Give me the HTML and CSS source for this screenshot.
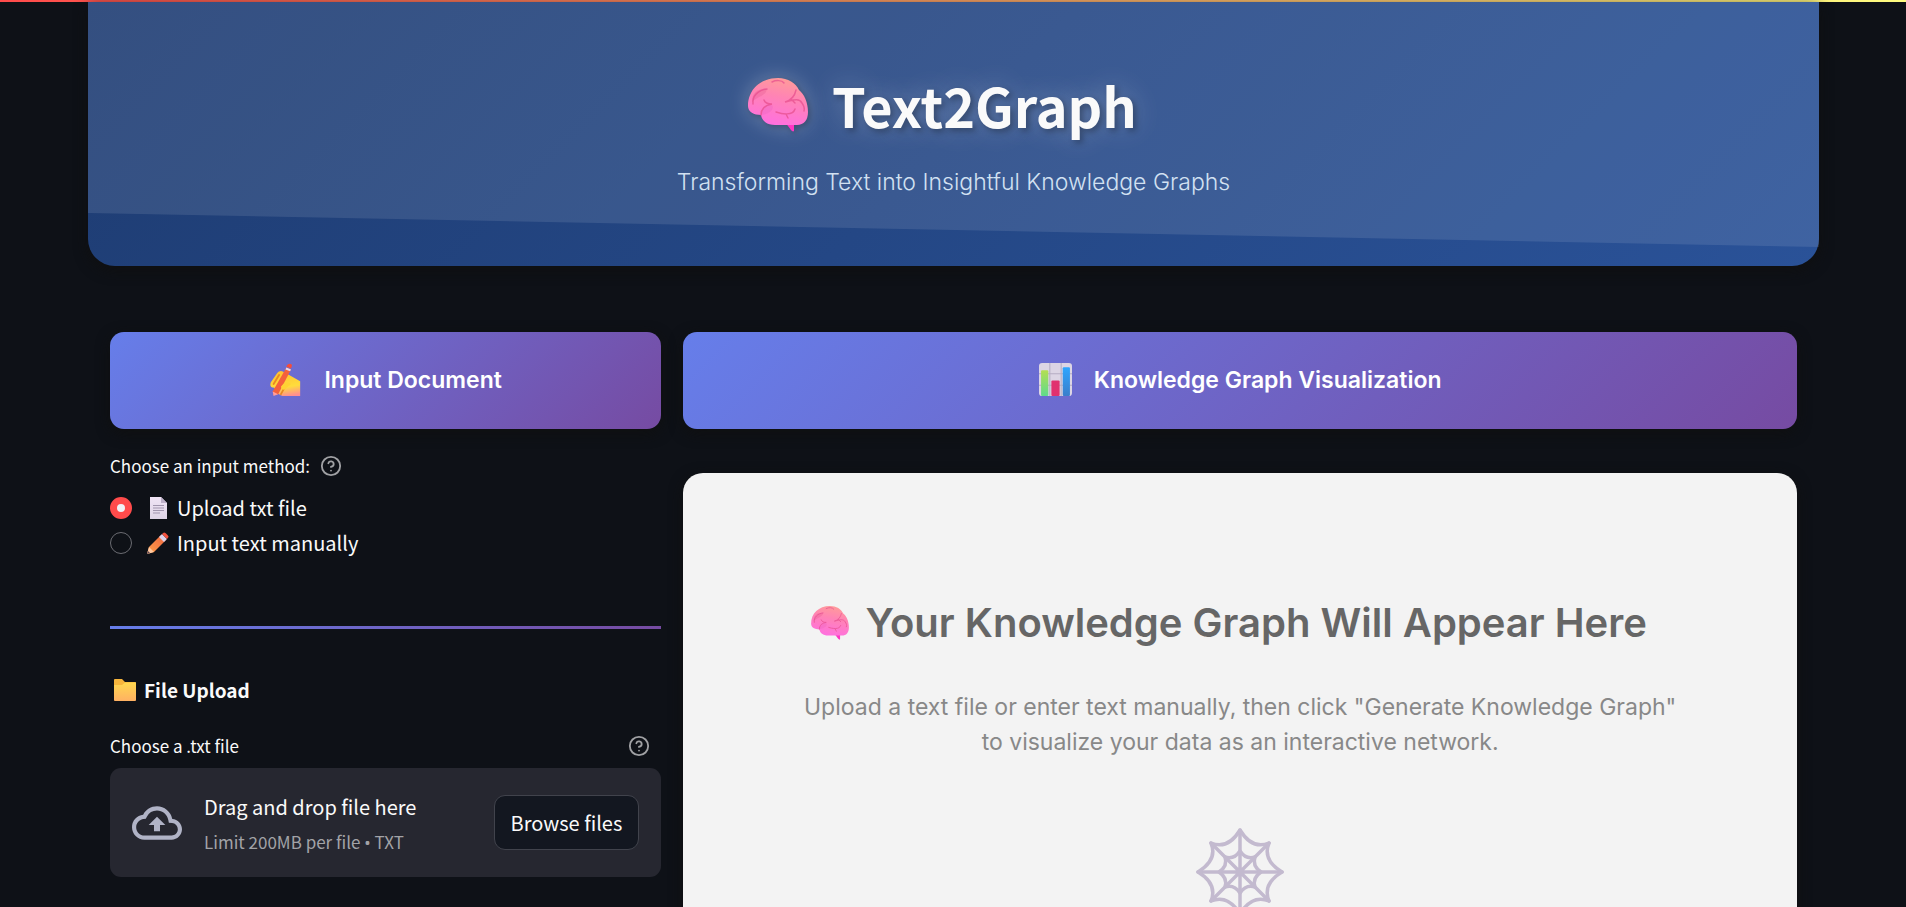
FILE: index.html
```html
<!DOCTYPE html>
<html lang="en">
<head>
<meta charset="utf-8">
<title>Text2Graph</title>
<link rel="stylesheet" href="styles.css">
</head>
<body>
<svg class="defs" width="0" height="0" aria-hidden="true">
  <defs>
    <linearGradient id="brain-fill" x1="0.65" y1="0" x2="0.4" y2="1">
      <stop offset="0" stop-color="#ff9c98"/><stop offset="0.4" stop-color="#ff84b4"/><stop offset="1" stop-color="#ff6fe0"/>
    </linearGradient>
    <symbol id="brain" viewBox="0 0 60 54">
      <path d="M37 44 46 45V53C45 54 44 53 43 52Z" fill="#ff35c4"/>
      <path d="M30 0C40 0 48 5 51 12C56 16 60 24 60 34C60 42 56 47 49 47H27C19 47 14 43 13 37C6 37 0 34 0 28C0 12 12 0 30 0Z" fill="url(#brain-fill)"/>
      <path d="M13 37C13 31 17 27 23 26C28 30 22 36 13 37Z" fill="#e85fc0" opacity="0.3"/>
      <path d="M4 24C4 15 10 10 19 11C18 18 10 18 4 24Z" fill="#e0558f" opacity="0.3"/>
      <g fill="none" stroke="#e8508f" stroke-width="1.5" stroke-linecap="round" opacity="0.75">
        <path d="M5 26C4 18 10 12 19 11M24 4C28 2 34 2 36 5"/>
        <path d="M13 37C13 30 18 27 24 26C20 26 17 25 16 22"/>
        <path d="M48 12C47 17 44 22 37 24C46 22 51 20 54 25C56 28 57 30 56 33M43 21 47 25"/>
        <path d="M28 34C34 36 45 38 47 31M38 36 40 40"/>
      </g>
    </symbol>
    <linearGradient id="hand-fill" x1="0.3" y1="0" x2="0.5" y2="1">
      <stop offset="0" stop-color="#ffc02e"/><stop offset="0.65" stop-color="#ffdc3c"/><stop offset="1" stop-color="#ff8f8f"/>
    </linearGradient>
    <symbol id="writing-hand" viewBox="0 0 34 36">
      <path d="M8 11C10 8 14 8 16 11L21 13 33 20V36H20C16 37 12 36 10 34C5 33 6 29 5 27C0 27 0 24 1 21Z" fill="url(#hand-fill)"/>
      <path d="M4 23 10 13M12 34 17 25" stroke="#e98a22" stroke-width="2" stroke-linecap="round" fill="none"/>
      <path d="M18 5 23 7 9 34 4 35 3 31Z" fill="#f4613c"/>
      <path d="M3 31 9 34 4 36Z" fill="#ff9e9e"/>
      <path d="M18 5 23 7 22 9 17 7Z" fill="#e5d9ee"/>
      <path d="M18 4C19 0 24 0 24 3L23 6Z" fill="#f44d3b"/>
      <path d="M12 26C15 21 20 20 23 23L18 27C15 31 13 29 12 26Z" fill="#ffd334"/>
    </symbol>
    <linearGradient id="bar-green" x1="0" y1="0" x2="0" y2="1"><stop offset="0" stop-color="#b4de52"/><stop offset="1" stop-color="#5fdb8c"/></linearGradient>
    <linearGradient id="bar-blue" x1="0" y1="0" x2="0" y2="1"><stop offset="0" stop-color="#2ea6ff"/><stop offset="1" stop-color="#3a7ecb"/></linearGradient>
    <symbol id="chart" viewBox="0 0 32 32">
      <rect width="32" height="32" rx="3" fill="#dcd5e4"/>
      <path d="M10.500 0V32M21.500 0V32M0 10.500H32M0 21.500H32" stroke="#b5adc2" stroke-width="1"/>
      <rect x="2" y="7" width="7" height="25" rx="1" fill="url(#bar-green)"/>
      <rect x="12" y="17" width="8" height="15" rx="1" fill="#e0316f"/>
      <rect x="23" y="4" width="7" height="28" rx="1" fill="url(#bar-blue)"/>
    </symbol>
    <linearGradient id="page-fill" x1="0" y1="0" x2="0" y2="1"><stop offset="0" stop-color="#f0e4f5"/><stop offset="1" stop-color="#ded4e6"/></linearGradient>
    <symbol id="page" viewBox="0 0 22 22">
      <path d="M3 0H14L20 6V22H3Z" fill="url(#page-fill)"/>
      <path d="M14 0 20 6H14Z" fill="#bcafc8"/>
      <path d="M6 8.500H17M6 11H17M6 13.500H17M6 16H13" stroke="#a195ae"/>
    </symbol>
    <linearGradient id="pencil-fill" x1="0" y1="1" x2="1" y2="0"><stop offset="0" stop-color="#ffa24a"/><stop offset="1" stop-color="#ee6340"/></linearGradient>
    <symbol id="pencil" viewBox="0 0 22 22">
      <path d="M14 3 19 8 7 20 0 22 2 15Z" fill="url(#pencil-fill)"/>
      <path d="M2 15 7 20 0 22Z" fill="#ffc9a0"/>
      <path d="M1 19 3 21 0 22Z" fill="#5c4550"/>
      <path d="M12 5 15 2 20 7 17 10Z" fill="#ddd3ec"/>
      <path d="M15 2 17 0.500C18 0 22 4 21.500 5L20 7Z" fill="#f4523f"/>
    </symbol>
    <linearGradient id="folder-fill" x1="0" y1="0" x2="0" y2="1"><stop offset="0" stop-color="#ffd84f"/><stop offset="1" stop-color="#ffb163"/></linearGradient>
    <symbol id="folder" viewBox="0 0 22 22">
      <path d="M0 1C0 0.500 0.500 0 1 0H8L11 3H21C21.500 3 22 3.500 22 4V10H0Z" fill="#f7b53c"/>
      <path d="M0 6H8L11 3.500H22V21C22 21.500 21.500 22 21 22H1C0.500 22 0 21.500 0 21Z" fill="url(#folder-fill)"/>
    </symbol>
    <symbol id="help" viewBox="0 0 24 24">
      <g fill="none" stroke="currentColor" stroke-width="2" stroke-linecap="round" stroke-linejoin="round">
        <circle cx="12" cy="12" r="10"/><path d="M9.090 9a3 3 0 0 1 5.830 1c0 2-3 3-3 3M12 17h0.010"/>
      </g>
    </symbol>
    <symbol id="cloud" viewBox="0 0 24 24">
      <path fill="currentColor" d="M19.350 10.040A7.490 7.490 0 0 0 12 4C9.110 4 6.600 5.640 5.350 8.040A5.994 5.994 0 0 0 0 14c0 3.310 2.690 6 6 6h13c2.760 0 5-2.240 5-5 0-2.640-2.050-4.780-4.650-4.960zM19 18H6c-2.210 0-4-1.790-4-4 0-2.050 1.530-3.760 3.560-3.970l1.070-.11.500-.95A5.469 5.469 0 0 1 12 6c2.620 0 4.880 1.860 5.390 4.430l.3 1.500 1.530.11A2.980 2.980 0 0 1 22 15c0 1.650-1.350 3-3 3zM8 13h2.550v3h2.900v-3H16l-4-4z"/>
    </symbol>
    <symbol id="web" viewBox="-44 -44 88 88">
      <g fill="none" stroke="#c3bacf" stroke-width="3.500" stroke-linecap="round" stroke-linejoin="round">
        <path d="M0-42V42M-42 0H42M-29-29 29 29M29-29-29 29"/>
        <path d="M0-42Q-12-22-29-29Q-22-12-42 0Q-22 12-29 29Q-12 22 0 42Q12 22 29 29Q22 12 42 0Q22-12 29-29Q12-22 0-42Z"/>
        <path d="M0-21Q-6-12-15-15Q-12-6-21 0Q-12 6-15 15Q-6 12 0 21Q6 12 15 15Q12 6 21 0Q12-6 15-15Q6-12 0-21Z"/>
      </g>
      <circle r="4" fill="#c3bacf"/>
    </symbol>
  </defs>
</svg>

<div class="decoration"></div>
<main class="page">
  <header class="hero">
    <h1 class="hero-title"><svg class="hero-brain" role="img" aria-label="Brain"><use href="#brain"/></svg>Text2Graph</h1>
    <p class="hero-subtitle">Transforming Text into Insightful Knowledge Graphs</p>
  </header>

  <div class="columns">
    <section class="column">
      <h2 class="section-title"><svg class="section-icon"><use href="#writing-hand"/></svg>Input Document</h2>
      <fieldset class="method">
        <legend class="label">Choose an input method:<button class="help" type="button" aria-label="Help"><svg><use href="#help"/></svg></button></legend>
        <label class="option"><input class="radio" type="radio" name="method" checked><svg class="emoji"><use href="#page"/></svg>Upload txt file</label>
        <label class="option"><input class="radio" type="radio" name="method"><svg class="emoji"><use href="#pencil"/></svg>Input text manually</label>
      </fieldset>
      <hr class="divider">
      <h3 class="upload-title"><svg class="emoji"><use href="#folder"/></svg>File Upload</h3>
      <div class="label upload-label"><span id="upload-label">Choose a .txt file</span><button class="help" type="button" aria-label="Help"><svg><use href="#help"/></svg></button></div>
      <div class="dropzone" role="group" aria-labelledby="upload-label">
        <svg class="cloud"><use href="#cloud"/></svg>
        <div class="drop-text">
          <span class="drop-main">Drag and drop file here</span>
          <span class="drop-limit">Limit 200MB per file <span class="bullet">•</span> TXT</span>
        </div>
        <button class="browse" type="button">Browse files</button>
      </div>
    </section>

    <section class="column">
      <h2 class="section-title"><svg class="section-icon"><use href="#chart"/></svg>Knowledge Graph Visualization</h2>
      <div class="placeholder">
        <h3 class="placeholder-title"><svg class="placeholder-brain"><use href="#brain"/></svg>Your Knowledge Graph Will Appear Here</h3>
        <p class="placeholder-text">Upload a text file or enter text manually, then click "Generate Knowledge Graph"<br>to visualize your data as an interactive network.</p>
        <svg class="web"><use href="#web"/></svg>
      </div>
    </section>
  </div>
</main>
</body>
</html>
```

FILE: styles.css
```css
:root {
  --sans: "Noto Sans CJK SC", "Noto Sans", sans-serif;
  --display: Inter, "Open Sans", sans-serif;
}

* {
  box-sizing: border-box;
}

html,
body {
  height: 100%;
}

body {
  margin: 0;
  overflow: hidden;
  background: #0e1117;
  color: #fafafa;
  font-family: var(--sans);
  font-size: 20px;
}

h1,
h2,
h3,
p {
  margin: 0;
}

svg {
  flex: none;
}

.defs {
  position: absolute;
}

.decoration {
  height: 2px;
  background: linear-gradient(90deg, #ff4b4b, #fffd80);
}

.page {
  padding: 0 87px 0 88px;
}

.hero {
  position: relative;
  display: flex;
  flex-direction: column;
  align-items: center;
  padding: 61px 22px 67px;
  border-radius: 0 0 27px 27px;
  background: linear-gradient(135deg, #1e3c72, #2a5298);
  box-shadow: 0 4px 14px rgba(16, 16, 16, 0.9);
}

.hero::before {
  content: "";
  position: absolute;
  inset: 0;
  background: rgba(255, 255, 255, 0.1);
  clip-path: polygon(0 0, 100% 0, 100% calc(100% - 19px), 0 calc(100% - 53px));
}

.hero-title {
  position: relative;
  display: flex;
  align-items: center;
  gap: 24px;
  padding-right: 22px;
  font-size: 54px;
  line-height: 84px;
  font-weight: 700;
  text-shadow: 3px 3px 6px rgba(0, 0, 0, 0.3), 0 0 28px rgba(255, 255, 255, 0.3);
}

.hero-brain {
  width: 60px;
  height: 54px;
  filter: drop-shadow(2px 2px 3px rgba(0, 0, 0, 0.3)) drop-shadow(0 0 10px rgba(255, 255, 255, 0.3));
}

.hero-subtitle {
  position: relative;
  padding-top: 18px;
  color: #d2e1f2;
  font-family: var(--display);
  font-size: 23px;
  line-height: 34px;
  font-weight: 300;
}

.columns {
  display: grid;
  grid-template-columns: calc(33.333% - 11px) minmax(0, 1fr);
  gap: 22px;
  padding: 66px 22px 0;
}

.column {
  display: flex;
  flex-direction: column;
}

.section-title {
  display: flex;
  align-items: center;
  justify-content: center;
  gap: 22px;
  min-height: 97px;
  padding-bottom: 2px;
  border-radius: 14px;
  background: linear-gradient(135deg, #667eea, #764ba2);
  box-shadow: 0 4px 14px rgba(16, 16, 16, 0.9);
  color: #fff;
  font-family: var(--display);
  font-size: 23px;
  font-weight: 600;
}

.section-icon {
  width: 33px;
  height: 33px;
}

.method {
  margin: 21px 0 0;
  padding: 0;
  border: 0;
}

.label {
  display: flex;
  align-items: center;
  gap: 10px;
  padding: 0;
  font-size: 17px;
  line-height: 32px;
}

.help {
  display: flex;
  padding: 0;
  border: 0;
  background: none;
  color: #a0a1a4;
}

.help svg {
  width: 22px;
  height: 22px;
}

.option {
  display: flex;
  align-items: center;
  gap: 8px;
  line-height: 35px;
}

.method .label {
  padding-bottom: 8px;
}

.radio {
  appearance: none;
  width: 22px;
  height: 22px;
  margin: 0 7px 0 0;
  border: 1px solid #6b6c72;
  border-radius: 50%;
  background: #0e1117;
}

.radio:checked {
  border: 7px solid #ff4b4b;
  background: #f0f2f6;
}

.emoji {
  width: 22px;
  height: 22px;
}

.divider {
  width: 100%;
  height: 3px;
  margin: 66px 0 43px;
  border: 0;
  background: linear-gradient(90deg, #667eea, #764ba2);
}

.upload-title {
  display: flex;
  align-items: center;
  gap: 8px;
  padding-left: 4px;
  font-size: 19px;
  line-height: 36px;
  font-weight: 700;
}

.upload-label {
  justify-content: space-between;
  margin-top: 22px;
  padding: 0 11px 6px 0;
}

.dropzone {
  display: flex;
  align-items: center;
  gap: 22px;
  min-height: 109px;
  padding: 0 22px;
  border-radius: 11px;
  background: #262730;
}

.cloud {
  width: 50px;
  height: 50px;
  color: #b0b3c6;
}

.drop-text {
  display: flex;
  flex: 1;
  flex-direction: column;
  padding-top: 4px;
}

.drop-main {
  line-height: 36px;
}

.drop-limit {
  color: #a2a3a7;
  font-size: 17px;
  line-height: 34px;
}

.bullet {
  font-family: "Noto Sans", sans-serif;
}

.browse {
  min-height: 55px;
  padding: 0 16px;
  border: 1px solid #41434c;
  border-radius: 11px;
  background: #131720;
  color: #fafafa;
  font: 20px var(--sans);
}

.placeholder {
  display: flex;
  flex-direction: column;
  align-items: center;
  min-height: 550px;
  margin-top: 44px;
  padding: 120px 22px;
  border-radius: 20px;
  background: #f3f3f3;
  box-shadow: 0 4px 14px rgba(16, 16, 16, 0.9);
  font-family: var(--display);
}

.placeholder-title {
  display: flex;
  align-items: center;
  gap: 16px;
  padding-right: 22px;
  color: #666;
  font-size: 40px;
  line-height: 60px;
  font-weight: 600;
}

.placeholder-brain {
  width: 38px;
  height: 34px;
}

.placeholder-text {
  padding: 37px 0 68px;
  color: #888;
  font-size: 23px;
  line-height: 35px;
  text-align: center;
}

.web {
  width: 88px;
  height: 88px;
}
```
